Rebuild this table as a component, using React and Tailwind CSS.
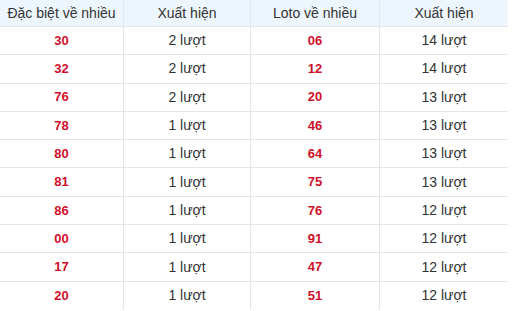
import React from 'react';

const rows = [
  ['30', '2 lượt', '06', '14 lượt'],
  ['32', '2 lượt', '12', '14 lượt'],
  ['76', '2 lượt', '20', '13 lượt'],
  ['78', '1 lượt', '46', '13 lượt'],
  ['80', '1 lượt', '64', '13 lượt'],
  ['81', '1 lượt', '75', '13 lượt'],
  ['86', '1 lượt', '76', '12 lượt'],
  ['00', '1 lượt', '91', '12 lượt'],
  ['17', '1 lượt', '47', '12 lượt'],
  ['20', '1 lượt', '51', '12 lượt'],
];

const cols = 'grid grid-cols-[124px_127px_129px_128px]';

const App = () => {
  return (
    <div className="w-[512px] h-[311px] bg-white overflow-hidden text-[#333] font-['Liberation_Sans',Arial,sans-serif]">
      <div className="w-[508px]">
        {/* Header */}
        <div className={`${cols} h-[27px] bg-[#eef6fd] border-b border-[#e3e8ee] text-[14px]`}>
          {['Đặc biệt về nhiều', 'Xuất hiện', 'Loto về nhiều', 'Xuất hiện'].map((h, i) => (
            <div key={i} className={`flex items-center justify-center ${i < 3 ? 'border-r border-[#e3e8ee]' : ''}`}>
              {h}
            </div>
          ))}
        </div>

        {/* Rows */}
        {rows.map((r, ri) => (
          <div
            key={ri}
            className={`${cols} h-[28.3px] ${ri < rows.length - 1 ? 'border-b border-[#e6e6e6]' : ''}`}
          >
            {r.map((c, ci) => (
              <div
                key={ci}
                className={`flex items-center justify-center ${ci < 3 ? 'border-r border-[#e6e6e6]' : ''} ${
                  ci % 2 === 0 ? 'text-[13px] font-bold text-[#d0102b]' : 'text-[14px] text-[#333]'
                }`}
              >
                {c}
              </div>
            ))}
          </div>
        ))}
      </div>
    </div>
  );
};

export default App;
